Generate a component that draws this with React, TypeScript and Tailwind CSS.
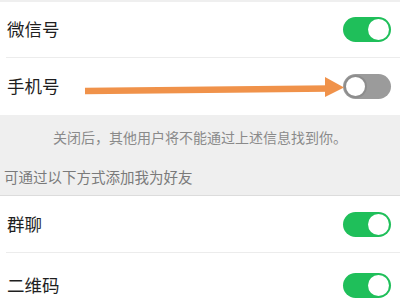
import React from "react";

const font = { fontFamily: '"Noto Sans CJK SC", "Noto Sans", sans-serif' };

function Toggle({ on }: { on: boolean }) {
  return (
    <div
      className={`w-[48px] h-[25px] rounded-full flex items-center px-[2px] ${
        on ? "bg-[#1fbf5a] justify-end" : "bg-[#9b9b9b] justify-start"
      }`}
    >
      <div
        className={`rounded-full bg-white ${
          on ? "w-[21px] h-[21px]" : "border-[2px] border-[#8d8d8d] w-[23px] h-[23px] -ml-[1px]"
        }`}
      />
    </div>
  );
}

function Row({ label, on, className = "" }: { label: string; on: boolean; className?: string }) {
  return (
    <div className={`flex items-center justify-between pl-[7px] pr-[9px] ${className}`}>
      <span className="text-[17.5px] text-[#1f1f1f]">{label}</span>
      <Toggle on={on} />
    </div>
  );
}

export default function App() {
  return (
    <div className="relative w-[400px] h-[300px] overflow-hidden bg-white" style={font}>
      <div className="h-[2px] bg-[#efefef]" />
      <Row label="微信号" on className="h-[55px]" />
      <div className="ml-[6px] h-px bg-[#ececec]" />
      <Row label="手机号" on={false} className="h-[57px]" />

      {/* Hint area */}
      <div className="h-[80px] bg-[#efefef] flex flex-col">
        <div className="h-[44px] flex items-center justify-center text-[14px] text-[#8a8a8a]">
          关闭后，其他用户将不能通过上述信息找到你。
        </div>
        <div className="h-[36px] flex items-center pl-[4px] text-[14.5px] text-[#7a7a7a]">
          可通过以下方式添加我为好友
        </div>
      </div>
      <div className="h-px bg-[#dcdcdc]" />

      <Row label="群聊" on className="h-[56px]" />
      <div className="ml-[6px] h-px bg-[#ececec]" />
      <Row label="二维码" on className="h-[64px]" />

      {/* Orange annotation arrow */}
      <svg className="absolute left-0 top-0" width="400" height="300" viewBox="0 0 400 300">
        <line x1="85" y1="91" x2="330" y2="88.5" stroke="#f0924a" strokeWidth="6.5" />
        <polygon points="325,77 344,87.5 325,97" fill="#f0924a" />
      </svg>
    </div>
  );
}
